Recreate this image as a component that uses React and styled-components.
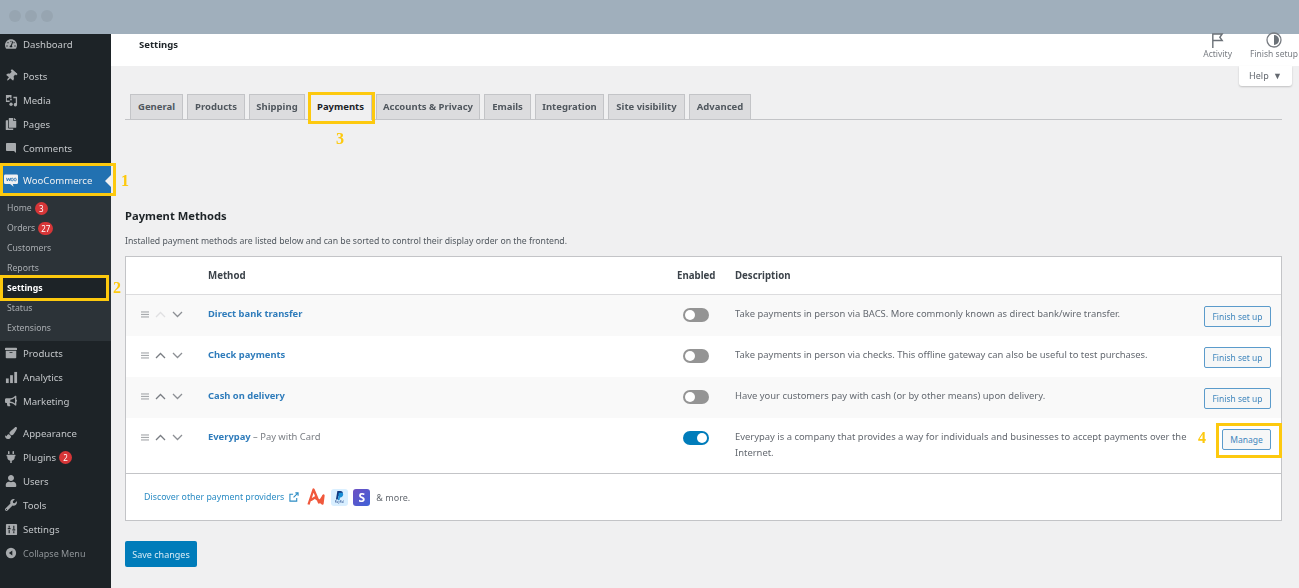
import React from "react";
import styled, { createGlobalStyle } from "styled-components";
import { FaTachometerAlt, FaThumbtack, FaCopy, FaArchive, FaBullhorn, FaPaintBrush, FaPlug, FaUser, FaWrench } from "react-icons/fa";
import { MdModeComment } from "react-icons/md";

const GlobalStyle = createGlobalStyle`
  html, body {
    margin: 0;
    padding: 0;
    height: 100%;
    background: #f0f0f1;
    font-family: "Noto Sans", "Open Sans", sans-serif;
    overflow: hidden;
  }
  * { box-sizing: border-box; }
`;

const MediaIcon = () => (
  <svg viewBox="0 0 14 14" width="13" height="13" fill="currentColor">
    <path d="M1 1h6v3H5.500L4.500 3 3.500 4.500 2 4v3h3v1.500H1z" />
    <rect x="5.500" y="5" width="1.800" height="1.800" />
    <path d="M9 3h4v8.500a1.800 1.800 0 1 1-1.400-1.700V4.500H9z" />
    <circle cx="6.500" cy="11" r="1.800" />
  </svg>
);

const WooIcon = () => (
  <svg viewBox="0 0 16 14" width="14" height="13">
    <path d="M1.500 0h13A1.500 1.500 0 0 1 16 1.500v8a1.500 1.500 0 0 1-1.500 1.500H10l1 3-4-3H1.500A1.500 1.500 0 0 1 0 9.500v-8A1.500 1.500 0 0 1 1.500 0z" fill="#f0f0f1" />
    <path d="M3 4l.8 3.600L5.300 4.500l1.300 3L7.500 4M9.300 4.300a1.300 1.600 0 1 0 .1 0zM12.700 4.300a1.300 1.600 0 1 0 .1 0z" fill="none" stroke="#2271b1" strokeWidth="1" />
  </svg>
);

const BarsIcon = () => (
  <svg viewBox="0 0 14 14" width="13" height="13" fill="currentColor">
    <rect x="1" y="8" width="3" height="5" />
    <rect x="5.500" y="4.500" width="3" height="8.500" />
    <rect x="10" y="1" width="3" height="12" />
  </svg>
);

const SlidersIcon = () => (
  <svg viewBox="0 0 14 14" width="13" height="13">
    <rect x="1" y="1" width="12" height="12" rx="1" fill="currentColor" />
    <path d="M4.500 3v2M4.500 7.500V11M9.500 3v3.500M9.500 9v2" stroke="#1d2327" strokeWidth="1.200" />
    <path d="M3 6h3M8 7.500h3" stroke="#1d2327" strokeWidth="1.400" />
  </svg>
);

const CollapseIcon = () => (
  <svg viewBox="0 0 14 14" width="12" height="12">
    <circle cx="7" cy="7" r="6" fill="currentColor" />
    <path d="M8.500 4v6L4.500 7z" fill="#1d2327" />
  </svg>
);

const FlagIcon = () => (
  <svg viewBox="0 0 16 16" width="15" height="15" fill="none" stroke="#6b7177" strokeWidth="1.500">
    <path d="M3 16V1h10l-2.500 3.500L13 8H3" />
  </svg>
);

const ProgressIcon = () => (
  <svg viewBox="0 0 16 16" width="16" height="16">
    <circle cx="8" cy="8" r="7" fill="none" stroke="#787c82" strokeWidth="1.300" />
    <path d="M8 3a5 5 0 0 1 0 10z" fill="#6b7177" />
  </svg>
);

const HamburgerIcon = () => (
  <svg viewBox="0 0 9 7" width="8" height="7" fill="#a7aaad">
    <rect width="9" height="1.300" />
    <rect y="2.800" width="9" height="1.300" />
    <rect y="5.600" width="9" height="1.300" />
  </svg>
);

const Chevron = ({ up, faint }) => (
  <svg viewBox="0 0 11 7" width="11" height="7" fill="none" stroke={faint ? "#e0e0e2" : up ? "#787c82" : "#8c8f94"} strokeWidth="1.300">
    <path d={up ? "M1 6l4.500-4.500L10 6" : "M1 1l4.500 4.500L10 1"} />
  </svg>
);

const ExternalIcon = () => (
  <svg viewBox="0 0 11 11" width="10" height="10" fill="none" stroke="#2b8cc4" strokeWidth="1.200">
    <path d="M8.500 6.500v3.500h-7.500v-7.500h3.500M5 6l5-5M7 1h3v3" />
  </svg>
);

const AfterpayLogo = () => (
  <svg viewBox="0 0 18 18" width="18" height="18" fill="none" stroke="#f0583c" strokeWidth="2.300" strokeLinejoin="round">
    <path d="M1.500 16.500L6.500 1.500 12 14.500 16.500 7.500 15.500 15.500 8 9.500 4 12" />
  </svg>
);

const PaypalLogo = () => (
  <PayTile>
    <svg viewBox="0 0 12 14" width="9" height="10">
      <path d="M3 0h4c3 0 4 1.500 3.500 3.500S8 7 6 7H4.500L3.500 12H1z" fill="#123a80" />
      <path d="M5 2.500h4c2 .4 2.500 2 2 3.500S9 9 7.500 9H6.500L6 13H3.800z" fill="#1a8fd6" />
    </svg>
    <PayWord>PayPal</PayWord>
  </PayTile>
);

const SIDE_GROUPS = [
  [{ label: "Dashboard", icon: <FaTachometerAlt /> }],
  [
    { label: "Posts", icon: <TiltedPin /> },
    { label: "Media", icon: <MediaIcon /> },
    { label: "Pages", icon: <FaCopy /> },
    { label: "Comments", icon: <MdModeComment /> },
  ],
];

const SIDE_AFTER = [
  [
    { label: "Products", icon: <FaArchive /> },
    { label: "Analytics", icon: <BarsIcon /> },
    { label: "Marketing", icon: <FaBullhorn /> },
  ],
  [
    { label: "Appearance", icon: <FaPaintBrush /> },
    { label: "Plugins", icon: <FaPlug />, badge: 2 },
    { label: "Users", icon: <FaUser /> },
    { label: "Tools", icon: <FaWrench /> },
    { label: "Settings", icon: <SlidersIcon /> },
  ],
];

const SUB_ITEMS = [
  { label: "Home", badge: 3 },
  { label: "Orders", badge: 27 },
  { label: "Customers" },
  { label: "Reports" },
  { label: "Settings", current: true },
  { label: "Status" },
  { label: "Extensions" },
];

const TABS = [
  { label: "General", width: 53 },
  { label: "Products", width: 58 },
  { label: "Shipping", width: 56 },
  { label: "Payments", width: 63, active: true },
  { label: "Accounts & Privacy", width: 104 },
  { label: "Emails", width: 47 },
  { label: "Integration", width: 69 },
  { label: "Site visibility", width: 77 },
  { label: "Advanced", width: 62 },
];

const METHODS = [
  { name: "Direct bank transfer", desc: "Take payments in person via BACS. More commonly known as direct bank/wire transfer.", firstRow: true },
  { name: "Check payments", desc: "Take payments in person via checks. This offline gateway can also be useful to test purchases." },
  { name: "Cash on delivery", desc: "Have your customers pay with cash (or by other means) upon delivery." },
  {
    name: "Everypay",
    suffix: " – Pay with Card",
    desc: "Everypay is a company that provides a way for individuals and businesses to accept payments over the Internet.",
    enabled: true,
    manage: true,
  },
];

function TiltedPin() {
  return <FaThumbtack style={{ transform: "rotate(40deg)" }} />;
}

const renderSideItem = (item) => (
  <SideItem key={item.label}>
    <SideIcon>{item.icon}</SideIcon>
    {item.label}
    {item.badge && <Badge>{item.badge}</Badge>}
  </SideItem>
);

const App = () => {
  return (
    <>
      <GlobalStyle />
      <Page>
        <WindowBar>
          <Dot />
          <Dot />
          <Dot />
        </WindowBar>
        <Body>
          <Sidebar>
            {SIDE_GROUPS.map((group, i) => (
              <SideGroup key={i}>{group.map(renderSideItem)}</SideGroup>
            ))}
            <WooItem>
              <SideIcon><WooIcon /></SideIcon>
              WooCommerce
              <StepNumber $left="121px" $top="6px">1</StepNumber>
            </WooItem>
            <SubMenu>
              {SUB_ITEMS.map((item) => (
                <SubItem key={item.label} $current={item.current}>
                  {item.label}
                  {item.badge && <Badge>{item.badge}</Badge>}
                  {item.current && <StepNumber $left="113px" $top="1px">2</StepNumber>}
                </SubItem>
              ))}
            </SubMenu>
            {SIDE_AFTER.map((group, i) => (
              <SideGroup key={i} $after>{group.map(renderSideItem)}</SideGroup>
            ))}
            <CollapseItem>
              <SideIcon><CollapseIcon /></SideIcon>
              Collapse Menu
            </CollapseItem>
          </Sidebar>
          <Main>
            <TopHeader>
              <HeaderTitle>Settings</HeaderTitle>
              <HeaderActions>
                <HeaderAction>
                  <FlagIcon />
                  Activity
                </HeaderAction>
                <HeaderAction>
                  <ProgressIcon />
                  Finish setup
                </HeaderAction>
              </HeaderActions>
            </TopHeader>
            <HelpRow>
              <HelpTab>Help <HelpCaret>▼</HelpCaret></HelpTab>
            </HelpRow>
            <Content>
              <Tabs>
                {TABS.map((tab) => (
                  <Tab key={tab.label} $active={tab.active} $width={tab.width}>
                    {tab.label}
                    {tab.active && <StepNumber $left="26px" $top="35px">3</StepNumber>}
                  </Tab>
                ))}
              </Tabs>
              <SectionTitle>Payment Methods</SectionTitle>
              <SectionText>
                Installed payment methods are listed below and can be sorted to control their display order on the frontend.
              </SectionText>
              <Table>
                <HeadRow>
                  <span />
                  <span>Method</span>
                  <span>Enabled</span>
                  <span>Description</span>
                  <span />
                </HeadRow>
                {METHODS.map((m, i) => (
                  <Row key={m.name} $alt={i % 2 === 0} $tall={m.manage}>
                    <SortCell>
                      <HamburgerIcon />
                      <Chevron up faint={m.firstRow} />
                      <Chevron />
                    </SortCell>
                    <MethodCell>
                      <MethodName>{m.name}</MethodName>
                      {m.suffix}
                    </MethodCell>
                    <ToggleCell>
                      <Toggle $on={m.enabled} />
                    </ToggleCell>
                    <DescCell>{m.desc}</DescCell>
                    <ActionCell>
                      {m.manage ? (
                        <ManageWrap>
                          <StepNumber $left="-24px" $top="0px">4</StepNumber>
                          <ActionButton $width={49}>Manage</ActionButton>
                        </ManageWrap>
                      ) : (
                        <ActionButton $width={67}>Finish set up</ActionButton>
                      )}
                    </ActionCell>
                  </Row>
                ))}
                <TableFooter>
                  <DiscoverLink>Discover other payment providers</DiscoverLink>
                  <ExternalIcon />
                  <Logos>
                    <AfterpayLogo />
                    <PaypalLogo />
                    <StripeTile>S</StripeTile>
                  </Logos>
                  <MoreText>&amp; more.</MoreText>
                </TableFooter>
              </Table>
              <SaveButton>Save changes</SaveButton>
            </Content>
          </Main>
        </Body>
      </Page>
    </>
  );
};

const Page = styled.div`
  width: 1299px;
  height: 588px;
  display: flex;
  flex-direction: column;
  overflow: hidden;
  filter: blur(0.35px);
`;

const WindowBar = styled.div`
  height: 34px;
  flex: none;
  background: #a0afbc;
  display: flex;
  align-items: center;
  gap: 4px;
  padding: 0 0 3px 9px;
`;

const Dot = styled.span`
  width: 12px;
  height: 12px;
  border-radius: 50%;
  background: #97a5b1;
`;

const Body = styled.div`
  flex: 1;
  display: flex;
  min-height: 0;
`;

const Sidebar = styled.nav`
  width: 111px;
  flex: none;
  background: #1d2327;
  color: #c3c6c9;
  font-size: 9.600px;
  position: relative;
  z-index: 2;
`;

const SideItem = styled.div`
  height: 24px;
  display: flex;
  align-items: center;
  position: relative;
  white-space: nowrap;
`;

const SideGroup = styled.div`
  padding-bottom: ${(p) => (p.$after ? "8px" : "5px")};
  &:first-child {
    padding-bottom: 10px;
    ${SideItem} {
      height: 20px;
    }
  }
`;

const SideIcon = styled.span`
  width: 23px;
  padding-left: 5px;
  flex: none;
  display: flex;
  align-items: center;
  font-size: 12px;
  color: #a7aaad;
`;

const Badge = styled.span`
  min-width: 13px;
  height: 13px;
  padding: 0 3px;
  margin-left: 3px;
  border-radius: 7px;
  background: #d63638;
  color: #fff;
  font-size: 8px;
  font-weight: 400;
  line-height: 13px;
  text-align: center;
`;

const WooItem = styled.div`
  height: 29px;
  margin-top: 1px;
  background: #2271b1;
  color: #f0f0f1;
  display: flex;
  align-items: center;
  position: relative;
  white-space: nowrap;
  ${SideIcon} {
    color: #f0f0f1;
    padding-left: 4px;
  }
  &::before {
    content: "";
    position: absolute;
    left: 0;
    right: -5px;
    top: -3px;
    bottom: -1px;
    border: 3px solid #fdc90e;
    pointer-events: none;
  }
  &::after {
    content: "";
    position: absolute;
    right: 0;
    top: 9px;
    border: 6px solid transparent;
    border-left: 0;
    border-right-color: #f0f0f1;
  }
`;

const SubMenu = styled.div`
  background: #2c3338;
  padding: 3px 0 3px;
`;

const SubItem = styled.div`
  height: 20px;
  padding-left: 7px;
  display: flex;
  align-items: center;
  position: relative;
  font-size: 8.700px;
  white-space: nowrap;
  color: ${(p) => (p.$current ? "#fff" : "#a9adb1")};
  font-weight: ${(p) => (p.$current ? 700 : 400)};
  ${(p) =>
    p.$current &&
    `
    &::before {
      content: "";
      position: absolute;
      left: 0;
      right: 2px;
      top: -3px;
      bottom: -3px;
      border: 3px solid #fdc90e;
      background: #1d2327;
      z-index: -1;
    }
    z-index: 1;
    isolation: isolate;
  `}
`;

const StepNumber = styled.span`
  position: absolute;
  left: ${(p) => p.$left};
  top: ${(p) => p.$top};
  font-family: "Liberation Serif", serif;
  font-size: 16px;
  font-weight: 700;
  line-height: 18px;
  color: #fdc90e;
`;

const CollapseItem = styled(SideItem)`
  color: #8f9498;
  font-size: 9px;
  margin-top: -8px;
`;

const Main = styled.main`
  flex: 1;
  min-width: 0;
  color: #50575e;
`;

const TopHeader = styled.header`
  height: 32px;
  background: #fff;
  display: flex;
  justify-content: space-between;
  padding-left: 28px;
`;

const HeaderTitle = styled.h1`
  margin: 0;
  font-size: 9.500px;
  font-weight: 700;
  line-height: 21px;
  color: #1d2327;
`;

const HeaderActions = styled.div`
  display: flex;
  gap: 18px;
  padding-right: 1px;
`;

const HeaderAction = styled.div`
  display: flex;
  flex-direction: column;
  align-items: center;
  justify-content: flex-end;
  font-size: 8.500px;
  line-height: 12px;
  color: #787c82;
  height: 26px;
  white-space: nowrap;
  svg {
    margin-top: -4px;
  }
`;

const HelpRow = styled.div`
  display: flex;
  justify-content: flex-end;
  padding-right: 7px;
`;

const HelpTab = styled.div`
  width: 53px;
  height: 20px;
  background: #fff;
  border-radius: 0 0 3px 3px;
  box-shadow: 0 1px 2px rgba(0, 0, 0, 0.2);
  font-size: 9px;
  line-height: 20px;
  text-align: center;
  color: #646970;
`;

const HelpCaret = styled.span`
  font-size: 9px;
  margin-left: 2px;
`;

const Content = styled.div`
  padding: 8px 17px 0 14px;
`;

const Tabs = styled.div`
  display: flex;
  gap: 4px;
  padding-left: 5px;
  border-bottom: 1px solid #c3c4c7;
  height: 26px;
`;

const Tab = styled.div`
  width: ${(p) => p.$width}px;
  height: 26px;
  border: 1px solid #c3c4c7;
  border-bottom: ${(p) => (p.$active ? "0" : "1px solid #c3c4c7")};
  background: ${(p) => (p.$active ? "#f0f0f1" : "#dcdcde")};
  color: ${(p) => (p.$active ? "#1d2327" : "#50575e")};
  font-size: 9.500px;
  font-weight: 700;
  line-height: 24px;
  text-align: center;
  white-space: nowrap;
  position: relative;
  ${(p) =>
    p.$active &&
    `
    &::after {
      content: "";
      position: absolute;
      inset: -3px -4px -4px -2px;
      border: 3px solid #fdc90e;
    }
  `}
`;

const SectionTitle = styled.h2`
  margin: 88px 0 0;
  font-size: 11.200px;
  font-weight: 700;
  line-height: 16px;
  color: #1d2327;
`;

const SectionText = styled.p`
  margin: 10px 0 0;
  font-size: 8.700px;
  line-height: 14px;
  color: #50575e;
`;

const Table = styled.div`
  margin-top: 8px;
  width: 1157px;
  background: #fff;
  border: 1px solid #c3c4c7;
  font-size: 9.700px;
`;

const columns = "82px 469px 58px 469px 1fr";

const HeadRow = styled.div`
  display: grid;
  grid-template-columns: ${columns};
  height: 38px;
  align-items: center;
  border-bottom: 1px solid #dcdcde;
  font-weight: 700;
  color: #3c434a;
`;

const Row = styled.div`
  display: grid;
  grid-template-columns: ${columns};
  height: ${(p) => (p.$tall ? "55px" : "41px")};
  background: ${(p) => (p.$alt ? "#f9f9f9" : "#fff")};
`;

const SortCell = styled.div`
  display: flex;
  align-items: center;
  gap: 6px;
  height: 38px;
  padding-left: 15px;
`;

const MethodCell = styled.div`
  padding-top: 12px;
  font-size: 9.400px;
  line-height: 14px;
  color: #787c82;
`;

const MethodName = styled.span`
  color: #2f7cbb;
  font-weight: 700;
`;

const ToggleCell = styled.div`
  padding: 13px 0 0 6px;
`;

const Toggle = styled.span`
  display: block;
  position: relative;
  width: 26px;
  height: 14px;
  border-radius: 7px;
  background: ${(p) => (p.$on ? "#007cba" : "#949494")};
  &::after {
    content: "";
    position: absolute;
    top: 2px;
    left: ${(p) => (p.$on ? "14px" : "2px")};
    width: 10px;
    height: 10px;
    border-radius: 50%;
    background: #fff;
  }
`;

const DescCell = styled.div`
  padding-top: 11px;
  font-size: 9.420px;
  line-height: 16px;
  color: #646970;
  max-width: 460px;
`;

const ActionCell = styled.div`
  padding: 11px 10px 0 0;
  display: flex;
  justify-content: flex-end;
  align-items: flex-start;
`;

const ManageWrap = styled.div`
  position: relative;
  &::after {
    content: "";
    position: absolute;
    inset: -6px -11px -8px -6px;
    border: 3px solid #fdc90e;
  }
`;

const ActionButton = styled.button`
  display: block;
  width: ${(p) => p.$width}px;
  height: 21px;
  padding: 0;
  border: 1px solid #5b9bcb;
  border-radius: 2px;
  background: #f6f7f7;
  color: #3f86bd;
  font-family: inherit;
  font-size: 8.500px;
  white-space: nowrap;
`;

const TableFooter = styled.div`
  height: 47px;
  border-top: 1px solid #c3c4c7;
  padding: 0 0 0 18px;
  display: flex;
  align-items: center;
  gap: 5px;
  font-size: 9px;
  color: #646970;
`;

const DiscoverLink = styled.span`
  color: #2b8cc4;
  font-size: 8.800px;
`;

const Logos = styled.div`
  display: flex;
  align-items: center;
  gap: 5.500px;
  margin-left: 3px;
`;

const MoreText = styled.span`
  margin-left: 1px;
`;

const PayTile = styled.div`
  width: 17px;
  height: 17px;
  border-radius: 3px;
  background: #d9efff;
  display: flex;
  flex-direction: column;
  align-items: center;
  justify-content: center;
`;

const PayWord = styled.span`
  font-size: 3px;
  line-height: 3px;
  color: #123a80;
`;

const StripeTile = styled.div`
  width: 17px;
  height: 17px;
  border-radius: 3px;
  background: linear-gradient(135deg, #6d4fc2, #3f63d8);
  color: #fff;
  font-size: 12px;
  font-weight: 700;
  line-height: 17px;
  text-align: center;
`;

const SaveButton = styled.button`
  display: block;
  margin-top: 20px;
  width: 72px;
  height: 26px;
  border: 0;
  border-radius: 2px;
  background: #007cba;
  color: #d8ecf6;
  font-family: inherit;
  font-size: 9px;
`;

export default App;
